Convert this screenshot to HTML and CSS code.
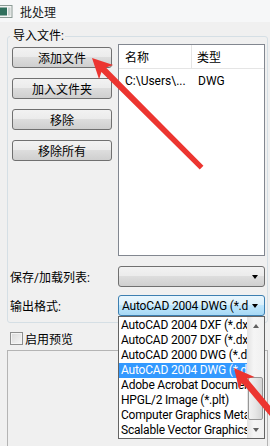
FILE: index.html
```html
<!DOCTYPE html>
<html lang="zh-CN">
<head>
    <meta charset="UTF-8">
    <title>批处理</title>
    <link rel="stylesheet" href="styles.css">
</head>
<body>
    <div class="window">
        <div class="titlebar">
            <svg class="app-icon" width="13" height="13" viewBox="0 0 13 13">
                <rect x="-3" y="0.5" width="15" height="12" fill="#f4f4f4" stroke="#8a9a94"/>
                <rect x="-1" y="2.5" width="8" height="8" fill="#2f6f5c"/>
                <rect x="8" y="2.5" width="2.5" height="8" fill="#c8d2ce"/>
            </svg>
            <span class="title">批处理</span>
        </div>

        <div class="content">
            <fieldset class="group">
                <legend>导入文件:</legend>
                <div class="import-row">
                    <div class="buttons">
                        <button class="btn">添加文件</button>
                        <button class="btn">加入文件夹</button>
                        <button class="btn">移除</button>
                        <button class="btn">移除所有</button>
                    </div>
                    <div class="file-list">
                        <div class="list-head">
                            <div class="col-name">名称</div>
                            <div class="col-type">类型</div>
                        </div>
                        <div class="list-row">
                            <div class="col-name">C:\Users\...</div>
                            <div class="col-type">DWG</div>
                        </div>
                    </div>
                </div>
                <div class="field-row">
                    <div class="field-label">保存/加载列表:</div>
                    <div class="combo">
                        <div class="combo-text"></div>
                        <div class="combo-arrow"></div>
                    </div>
                </div>
                <div class="field-row tight">
                    <div class="field-label">输出格式:</div>
                    <div class="combo focus">
                        <div class="combo-text">AutoCAD 2004 DWG (*.dwg)</div>
                        <div class="combo-arrow"></div>
                    </div>
                </div>
            </fieldset>

            <div class="check-row">
                <span class="checkbox"></span>
                <span>启用预览</span>
            </div>

            <div class="preview"></div>
        </div>

        <div class="dropdown">
            <div class="options">
                <div class="option">AutoCAD 2004 DXF (*.dxf)</div>
                <div class="option">AutoCAD 2007 DXF (*.dxf)</div>
                <div class="option">AutoCAD 2000 DWG (*.dwg)</div>
                <div class="option selected">AutoCAD 2004 DWG (*.dwg)</div>
                <div class="option">Adobe Acrobat Document (*.pdf)</div>
                <div class="option">HPGL/2 Image (*.plt)</div>
                <div class="option">Computer Graphics Metafile (*.cgm)</div>
                <div class="option">Scalable Vector Graphics (*.svg)</div>
            </div>
            <div class="scrollbar">
                <div class="scroll-btn"><span class="tri-up"></span></div>
                <div class="scroll-track">
                    <div class="scroll-thumb"></div>
                </div>
                <div class="scroll-btn"><span class="tri-down"></span></div>
            </div>
        </div>

        <!-- 标注箭头 -->
        <svg class="marks" width="270" height="446" viewBox="0 0 270 446">
            <g transform="translate(92 58) rotate(45)" fill="#ec3530">
                <path d="M0 0 L20 -10 L16.5 -3.2 L155 -2.6 L155 2.6 L16.5 3.2 L20 10 Z"/>
            </g>
            <g transform="translate(234 368) rotate(50)" fill="#ec3530">
                <path d="M0 0 L20 -10 L16.5 -3.4 L90 -3.2 L90 3.2 L16.5 3.4 L20 10 Z"/>
            </g>
        </svg>
    </div>
</body>
</html>
```

FILE: styles.css
```css
* { margin: 0; padding: 0; box-sizing: border-box; }
body { width: 270px; height: 446px; overflow: hidden; background: #f0f0f0; font-family: Roboto, "Noto Sans CJK SC", sans-serif; font-size: 12px; color: #000; }
.window { position: relative; width: 270px; height: 446px; overflow: hidden; }

.titlebar { height: 22px; display: flex; align-items: center; gap: 7px; background: #f6f7f8; }
.app-icon { flex: none; }
.title { font-size: 12px; color: #1a1a1a; }

.content { padding: 7px 2px 0 7px; }
.group { width: 261px; border: 1px solid #d5dfe5; border-radius: 3px; padding: 0 2px 6px 2px; }
.group legend { padding: 0 1px 0 3px; line-height: 15px; }

.import-row { display: flex; gap: 6px; }
.buttons { width: 100px; margin-left: 2px; padding-top: 3px; display: flex; flex-direction: column; gap: 10px; }
.btn { height: 21px; border: 1px solid #707070; border-radius: 3px; background: linear-gradient(#f2f2f2 0%, #ebebeb 50%, #dddddd 50%, #cfcfcf 100%); font: inherit; color: #000; }

.file-list { width: 147px; height: 212px; background: #fff; border: 1px solid #828790; }
.list-head { height: 24px; display: flex; border-bottom: 1px solid #e5e5e5; }
.list-head .col-name { border-right: 1px solid #e5e5e5; }
.list-row { height: 23px; display: flex; align-items: center; }
.col-name { width: 73px; padding-left: 6px; display: flex; align-items: center; white-space: nowrap; overflow: hidden; }
.col-type { flex: 1; padding-left: 6px; display: flex; align-items: center; }
.list-head .col-type { padding-left: 5px; }

.field-row { display: flex; align-items: center; margin-top: 10px; }
.field-row.tight { margin-top: 8px; }
.field-label { width: 108px; }
.combo { width: 147px; height: 21px; display: flex; align-items: center; border: 1px solid #707070; border-radius: 3px; background: linear-gradient(#f2f2f2 0%, #ebebeb 50%, #dddddd 50%, #cfcfcf 100%); }
.combo.focus { border-color: #3c7fb1; background: linear-gradient(#eaf6fd 0%, #d9f0fc 50%, #bee6fd 50%, #a7d9f5 100%); }
.combo-text { flex: 1; padding-left: 3px; white-space: nowrap; overflow: hidden; letter-spacing: -0.2px; }
.combo-arrow { width: 0; height: 0; margin: 1px 6px 0 4px; border-left: 3.5px solid transparent; border-right: 3.5px solid transparent; border-top: 4px solid #000; }

.check-row { height: 18px; margin-top: 6px; padding-left: 3px; display: flex; align-items: center; gap: 2px; }
.checkbox { width: 13px; height: 13px; border: 1px solid #8e8f8f; background: linear-gradient(135deg, #dadada, #f6f6f6); box-shadow: inset 0 0 0 1px #f4f4f4; }

.preview { width: 261px; height: 110px; margin-top: 3px; border: 1px solid #b4b4b4; }

.dropdown { position: absolute; left: 118px; top: 316px; width: 147px; height: 123px; padding-top: 1px; display: flex; background: #fff; border: 1px solid #646464; }
.options { width: 128px; overflow: hidden; }
.option { height: 15px; line-height: 15px; padding-left: 2px; white-space: nowrap; letter-spacing: -0.2px; }
.option.selected { background: #3399ff; color: #fff; }
.scrollbar { width: 17px; margin-top: -1px; display: flex; flex-direction: column; background: linear-gradient(90deg, #e3e3e3, #f5f5f5 40%, #f0f0f0); }
.scroll-btn { height: 17px; display: flex; align-items: center; justify-content: center; }
.scroll-track { flex: 1; padding-top: 43px; }
.scroll-thumb { height: 43px; margin: 0 1px; border: 1px solid #979797; border-radius: 2px; background: linear-gradient(90deg, #f2f2f2, #e6e6e6 50%, #d4d4d4); }
.tri-up { width: 0; height: 0; border-left: 3.5px solid transparent; border-right: 3.5px solid transparent; border-bottom: 4px solid #606060; }
.tri-down { width: 0; height: 0; border-left: 3.5px solid transparent; border-right: 3.5px solid transparent; border-top: 4px solid #606060; }

.marks { position: absolute; left: 0; top: 0; pointer-events: none; }
```
